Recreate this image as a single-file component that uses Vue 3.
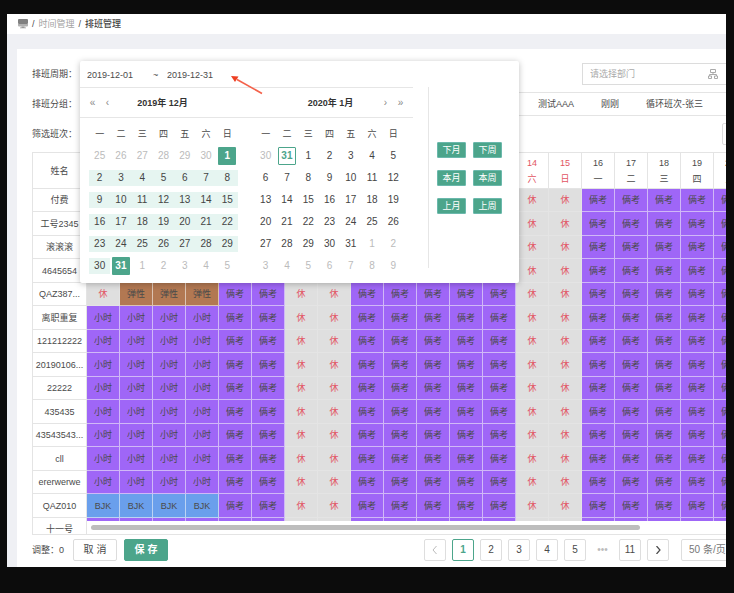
<script setup>
import { ref } from 'vue'

const week = ['一', '二', '三', '四', '五', '六', '日']

function buildMonth(lead, length, marks) {
  const days = lead.map((n) => ({ n, kind: 'other' }))
  for (let n = 1; n <= length; n++) days.push({ n, kind: marks(n) })
  for (let n = 1; days.length < 42; n++) days.push({ n, kind: 'other' })
  return days
}

const december = buildMonth([25, 26, 27, 28, 29, 30], 31, (n) =>
  n === 1 || n === 31 ? 'picked' : 'range'
)
const january = buildMonth([30, 31], 31, () => 'plain')
january[1].kind = 'today'

const quick = ['下月', '下周', '本月', '本周', '上月', '上周']

const dates = Array.from({ length: 20 }, (_, i) => ({
  n: i + 1,
  day: week[(i + 6) % 7],
  rest: (i + 6) % 7 > 4
}))

const names = [
  '付费', '工号2345', '滚滚滚', '4645654', 'QAZ387...', '离职重复', '121212222',
  '20190106...', '22222', '435435', '43543543...', 'cll', 'ererwerwe', 'QAZ010', '十一号'
]

function shiftFor(name, i) {
  const late = names.indexOf(name) > 4
  if (i < 4 && name === 'QAZ010') return { text: 'BJK', kind: 'blue' }
  if (i < 4 && late) return { text: '小时', kind: 'purple' }
  if (dates[i].rest) return { text: '休', kind: 'rest' }
  if (i < 4 && name === 'QAZ387...') return { text: '弹性', kind: 'brown' }
  return { text: '俩考', kind: 'purple' }
}

const rows = names.map((name) => ({ name, cells: dates.map((_, i) => shiftFor(name, i)) }))

const start = ref('2019-12-01')
const end = ref('2019-12-31')
const department = ref('')
const page = ref(1)
</script>

<template>
  <div class="shell">
    <nav class="crumbs">
      <svg class="monitor" viewBox="0 0 10 10" aria-hidden="true">
        <rect x="0" y="0" width="10" height="5" rx="1" fill="#808080" />
        <path d="M0 5h10v1.500a1 1 0 0 1-1 1H1a1 1 0 0 1-1-1z" fill="#b0b0b0" />
        <path d="M3.500 7.500h3v1H8v.8H2v-.8h1.500z" fill="#999" />
      </svg>
      <span>/</span>
      <a href="#">时间管理</a>
      <span>/</span>
      <strong>排班管理</strong>
    </nav>

    <main class="panel">
      <div class="filters">
        <div class="row">
          <label for="start">排班周期：</label>
          <div class="department">
            <input v-model="department" placeholder="请选择部门" aria-label="请选择部门" />
            <svg class="tree" viewBox="0 0 10 10" aria-hidden="true">
              <path d="M2.500.5h5v3h-5zM5 3.500v2M1.500 7V5.500h7V7M.5 7h3v2.500h-3zM6.500 7h3v2.500h-3z" fill="none" stroke="#aaa" />
            </svg>
          </div>

          <section class="picker">
            <div class="months">
              <div class="inputs">
                <input id="start" v-model="start" />
                <span>~</span>
                <input v-model="end" aria-label="2019-12-31" />
              </div>
              <header class="head">
                <div class="title">
                  <button type="button">«</button>
                  <button type="button">‹</button>
                  <strong>2019年 12月</strong>
                </div>
                <div class="title">
                  <strong>2020年 1月</strong>
                  <button type="button">›</button>
                  <button type="button">»</button>
                </div>
              </header>
              <div class="calendars">
                <div v-for="(month, m) in [december, january]" :key="m" class="calendar">
                  <span v-for="w in week" :key="w" class="weekday">{{ w }}</span>
                  <button v-for="(d, i) in month" :key="i" type="button" class="day" :class="d.kind">{{ d.n }}</button>
                </div>
              </div>
            </div>
            <div class="quick">
              <button v-for="q in quick" :key="q" type="button">{{ q }}</button>
            </div>
            <svg class="pointer" viewBox="0 0 34 20" aria-hidden="true">
              <path d="M32 18.500L7 4.500" stroke="#f4614a" stroke-width="1.600" />
              <path d="M1 1l7.500.5L5 7z" fill="#ee3f22" />
            </svg>
          </section>
        </div>

        <div class="row">
          <span class="label">排班分组：</span>
          <div class="groups">
            <button type="button">测试AAA</button>
            <button type="button">刚刚</button>
            <button type="button">循环班次-张三</button>
          </div>
        </div>

        <div class="row">
          <label for="shift">筛选班次：</label>
          <input id="shift" class="shift" />
        </div>
      </div>

      <div class="sheet">
        <table>
          <colgroup>
            <col class="name-col" />
            <col v-for="d in dates" :key="d.n" class="date-col" />
          </colgroup>
          <thead>
            <tr>
              <th class="name">姓名</th>
              <th v-for="d in dates" :key="d.n" :class="{ weekend: d.rest }">
                <span>{{ d.n }}</span>
                <span>{{ d.day }}</span>
              </th>
            </tr>
          </thead>
          <tbody>
            <tr v-for="r in rows" :key="r.name">
              <td class="name">{{ r.name }}</td>
              <td v-for="(c, i) in r.cells" :key="i" :class="c.kind">{{ c.text }}</td>
            </tr>
          </tbody>
        </table>
        <div class="track"><div class="thumb"></div></div>
      </div>

      <footer class="foot">
        <span class="count">调整：0</span>
        <button type="button" class="btn cancel">取 消</button>
        <button type="button" class="btn save">保 存</button>
        <div class="pages">
          <button type="button" class="off" disabled>
            <svg viewBox="0 0 8 8"><path d="M5.500 0L2 4l3.500 4" fill="none" stroke="currentColor" /></svg>
          </button>
          <button v-for="n in 5" :key="n" type="button" :class="{ on: n === page }" @click="page = n">{{ n }}</button>
          <span class="dots">•••</span>
          <button type="button">11</button>
          <button type="button">
            <svg viewBox="0 0 8 8"><path d="M2.500 0L6 4 2.500 8" fill="none" stroke="currentColor" stroke-width="1.200" /></svg>
          </button>
          <select aria-label="50 条/页">
            <option>50 条/页</option>
          </select>
        </div>
      </footer>
    </main>
  </div>
</template>

<style>
body {
  background: #0c0c0c;
}
</style>

<style scoped>
.shell,
.shell * {
  box-sizing: border-box;
}

.shell {
  display: flex;
  flex-direction: column;
  height: calc(100vh - 40px);
  margin: 14px 8px 26px 7px;
  overflow: hidden;
  background: #eff0f4;
  color: #4a4a4a;
  font: 9px/16px "Liberation Sans", "Noto Sans CJK SC", sans-serif;
}

button,
input,
select {
  margin: 0;
  padding: 0;
  border: 0;
  background: none;
  color: inherit;
  font: inherit;
  outline: 0;
}

.crumbs {
  display: flex;
  align-items: center;
  gap: 4px;
  height: 20px;
  padding-left: 11px;
  background: #fff;
}

.crumbs a {
  color: #a3a3a3;
  text-decoration: none;
}

.crumbs strong {
  font-weight: 500;
  color: #444;
}

.monitor {
  width: 10px;
  height: 10px;
}

.panel {
  display: flex;
  flex: 1;
  flex-direction: column;
  min-height: 0;
  margin: 15px 0 0 10px;
  padding: 14px 0 0 15px;
  background: #fff;
}

.filters {
  display: flex;
  flex-direction: column;
  gap: 8px;
  margin-bottom: 7px;
}

.row {
  position: relative;
  display: flex;
  align-items: center;
  height: 22px;
}

.row > label,
.row > .label {
  width: 48px;
  white-space: nowrap;
}

.department {
  display: flex;
  flex: 1;
  align-items: center;
  height: 22px;
  margin: 0 -1px 0 502px;
  padding: 0 8px 0 7px;
  border: 1px solid #dcdcdc;
}

.department input {
  flex: 1;
  min-width: 0;
}

.department input::placeholder {
  color: #aaa;
}

.tree {
  width: 10px;
  height: 10px;
}

.groups {
  display: flex;
  flex: 1;
  align-items: center;
  gap: 27px;
  height: 24px;
  padding-left: 458px;
  border: solid #e4e4e4;
  border-width: 1px 0;
  white-space: nowrap;
}

.shift {
  width: 12px;
  height: 22px;
  margin: 0 -8px 0 auto;
  border: 1px solid #dcdcdc;
  border-radius: 2px;
}

.picker {
  position: absolute;
  z-index: 2;
  top: -2px;
  left: 48px;
  display: flex;
  width: 439px;
  padding-bottom: 6px;
  border-radius: 2px;
  background: #fff;
  box-shadow: 0 1px 6px rgba(0, 0, 0, 0.25);
}

.months {
  width: 333px;
}

.inputs {
  display: flex;
  align-items: center;
  height: 27px;
  padding: 2px 0 0 7px;
  border-bottom: 1px solid #e6e6e6;
}

.inputs input {
  width: 60px;
}

.inputs span {
  width: 13px;
  padding-left: 6px;
  margin-right: 7px;
}

.head {
  display: flex;
  height: 30px;
  border-bottom: 1px solid #e6e6e6;
}

.title {
  display: grid;
  flex: 1;
  align-items: center;
}

.title:first-child {
  grid-template-columns: 15px 15px 1fr;
  padding: 0 32px 0 5px;
}

.title:last-child {
  grid-template-columns: 1fr 15px 15px;
  padding: 0 5px 0 41px;
}

.title strong {
  color: #333;
  text-align: center;
}

.title button {
  color: #888;
  font-size: 10px;
}

.calendars {
  display: grid;
  grid-template-columns: 1fr 1fr;
  gap: 17px;
  padding: 5px 9px 0;
}

.calendar {
  display: grid;
  grid-template-columns: repeat(7, 1fr);
  grid-auto-rows: 22px;
  align-items: center;
  text-align: center;
}

.day {
  height: 16px;
  color: #444;
  font-size: 10px;
}

.day.other {
  color: #bbb;
}

.day.range {
  background: #e6f5f1;
}

.day.picked,
.day.today {
  justify-self: center;
  width: 18px;
  height: 18px;
  border-radius: 1px;
  font-weight: 700;
}

.day.picked {
  background: #4ca58b;
  color: #fff;
}

.day.today {
  border: 1px solid #4ca58b;
  color: #4ca58b;
}

.quick {
  display: grid;
  grid-template-columns: 29px 29px;
  grid-auto-rows: 16px;
  gap: 12px 7px;
  height: 181px;
  margin: 26px 0 0 15px;
  padding: 55px 0 0 8px;
  border-left: 1px solid #e6e6e6;
}

.quick button {
  border: 1px solid #6bb8ac;
  border-radius: 1px;
  background: #4ca58b;
  color: #fff;
  line-height: 14px;
}

.pointer {
  position: absolute;
  top: 14px;
  left: 150px;
  width: 34px;
  height: 20px;
}

.sheet {
  position: relative;
  flex: 1;
  min-height: 0;
  overflow: hidden;
  border: solid #e4e4e4;
  border-width: 1px 0 1px 1px;
}

table {
  width: 0;
  table-layout: fixed;
  border-collapse: separate;
  border-spacing: 0;
  text-align: center;
}

.name-col {
  width: 54px;
}

.date-col {
  width: 33px;
}

th,
td {
  padding: 0;
  border: solid #e4e4e4;
  border-width: 0 1px 1px 0;
  font-weight: 400;
  white-space: nowrap;
}

th {
  height: 36px;
}

th span {
  display: block;
}

td {
  height: 23px;
}

tr:nth-child(even) td {
  height: 24px;
}

.weekend,
.rest {
  color: #e25563;
}

.rest {
  background: #dfdfdf;
}

.purple {
  border-color: #d0b8f7;
  background: #9f66f7;
}

.brown {
  border-color: #dcc3b2;
  background: #b27852;
}

.blue {
  border-color: #bcd3f3;
  background: #6a9fec;
}

.track {
  position: absolute;
  right: 0;
  bottom: 0;
  left: 54px;
  height: 13px;
  padding: 4px;
  background: #fff;
}

.thumb {
  width: 87%;
  height: 5px;
  border-radius: 3px;
  background: #bdbdbd;
}

.foot {
  display: flex;
  align-items: center;
  height: 32px;
  padding-bottom: 3px;
  white-space: nowrap;
}

.count {
  width: 34px;
}

.btn {
  width: 44px;
  height: 22px;
  margin-left: 7px;
  border: 1px solid #dcdcdc;
  border-radius: 2px;
  font-size: 10px;
}

.save {
  border-color: #4ca58b;
  background: #4ca58b;
  color: #fff;
  font-weight: 700;
}

.pages {
  display: flex;
  gap: 6px;
  margin: 0 -15px 0 auto;
  font-size: 10px;
}

.pages button {
  width: 22px;
  height: 22px;
  border: 1px solid #dedede;
  border-radius: 2px;
}

.pages svg {
  display: block;
  width: 8px;
  height: 8px;
  margin: auto;
}

.pages .off {
  color: #bbb;
}

.pages .on {
  border-color: #4ca58b;
  color: #4ca58b;
  font-weight: 700;
}

.dots {
  width: 21px;
  color: #bbb;
  line-height: 22px;
  text-align: center;
}

.pages select {
  width: 60px;
  height: 22px;
  margin-left: 6px;
  padding-left: 7px;
  border: 1px solid #dedede;
  border-radius: 2px;
  appearance: none;
  color: #777;
}
</style>
